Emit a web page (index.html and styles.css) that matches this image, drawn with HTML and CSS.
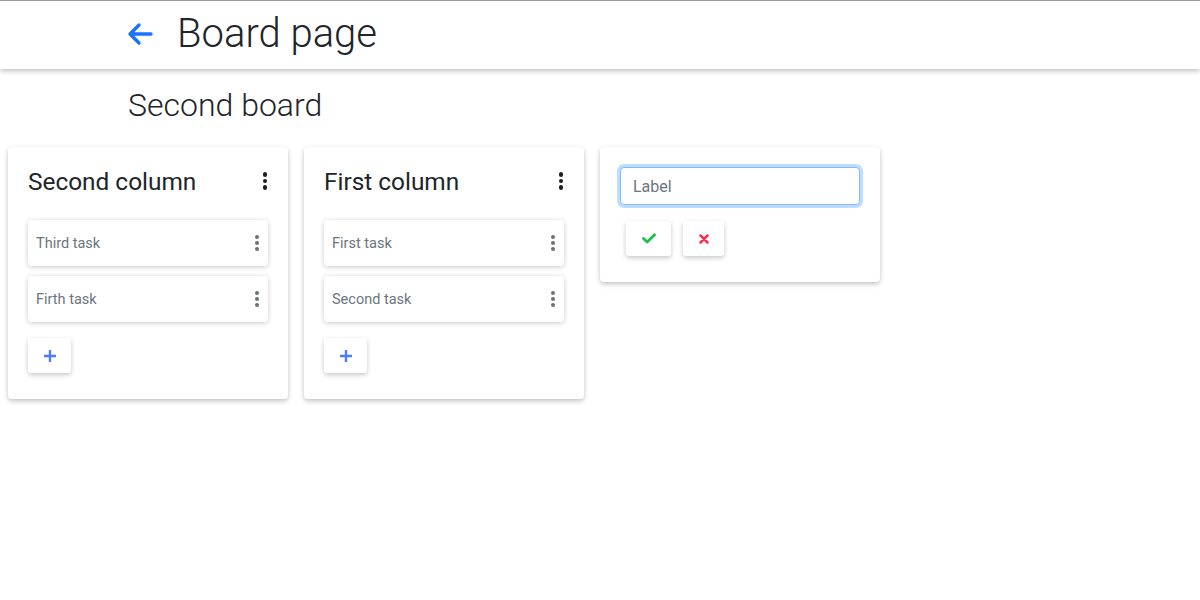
FILE: index.html
```html
<!DOCTYPE html>
<html>
<head>
<meta charset="utf-8">
<link rel="stylesheet" href="styles.css">
</head>
<body>
<header class="topbar">
  <a class="back" href="#">
    <svg width="26" height="24" viewBox="0 0 26 24"><path d="M24 12H3M12 3L3 12L12 21" fill="none" stroke="#1a73ff" stroke-width="3.4" stroke-linecap="round" stroke-linejoin="round"/></svg>
  </a>
  <h1 class="page-title">Board page</h1>
</header>
<h2 class="board-title">Second board</h2>
<main class="columns">
  <section class="column">
    <div class="column-head">
      <h3 class="column-title">Second column</h3>
      <span class="kebab dark"><i></i><i></i><i></i></span>
    </div>
    <div class="tasks">
      <div class="task"><span>Third task</span><span class="kebab"><i></i><i></i><i></i></span></div>
      <div class="task"><span>Firth task</span><span class="kebab"><i></i><i></i><i></i></span></div>
    </div>
    <button class="btn add"><svg width="12" height="12" viewBox="0 0 12 12"><path d="M6 0V12M0 6H12" stroke="#4f7cff" stroke-width="2.4"/></svg></button>
  </section>
  <section class="column">
    <div class="column-head">
      <h3 class="column-title">First column</h3>
      <span class="kebab dark"><i></i><i></i><i></i></span>
    </div>
    <div class="tasks">
      <div class="task"><span>First task</span><span class="kebab"><i></i><i></i><i></i></span></div>
      <div class="task"><span>Second task</span><span class="kebab"><i></i><i></i><i></i></span></div>
    </div>
    <button class="btn add"><svg width="12" height="12" viewBox="0 0 12 12"><path d="M6 0V12M0 6H12" stroke="#4f7cff" stroke-width="2.4"/></svg></button>
  </section>
  <section class="column new-column">
    <input class="label-input" type="text" placeholder="Label">
    <div class="actions">
      <button class="btn ok"><svg width="14" height="11" viewBox="0 0 14 11"><path d="M1.5 5.5L5.2 9L12.5 1.8" fill="none" stroke="#1fbf4a" stroke-width="2.8" stroke-linecap="round" stroke-linejoin="round"/></svg></button>
      <button class="btn cancel"><svg width="10" height="10" viewBox="0 0 10 10"><path d="M1.5 1.5L8.5 8.5M8.5 1.5L1.5 8.5" stroke="#ff2d4f" stroke-width="2.5" stroke-linecap="round"/></svg></button>
    </div>
  </section>
</main>
</body>
</html>
```
FILE: styles.css
```css
* { box-sizing: border-box; }
html, body { margin: 0; padding: 0; background: #fff; }
body { font-family: Roboto, "Noto Sans", Arial, sans-serif; color: #212529; min-height: 100vh; }

.topbar {
  height: 69px;
  border-top: 1px solid #9a9a9a;
  display: flex;
  align-items: center;
  padding-left: 127px;
  gap: 24px;
  box-shadow: 0 2px 5px rgba(0,0,0,0.25);
  background: #fff;
}
.back { display: flex; margin-top: -2px; }
.page-title {
  margin: 0;
  font-size: 40px;
  font-weight: 300;
  line-height: 1;
  margin-top: -3px;
}
.board-title {
  margin: 17px 0 0 128px;
  font-size: 32px;
  font-weight: 300;
  line-height: 38px;
}
.columns {
  display: flex;
  align-items: flex-start;
  gap: 16px;
  padding: 23px 8px 24px;
}
.column {
  width: 280px;
  background: #fff;
  border-radius: 4px;
  box-shadow: 0 2px 5px rgba(0,0,0,0.25);
  padding: 20px 20px 26px;
}
.column-head {
  display: flex;
  justify-content: space-between;
  align-items: flex-start;
  height: 53px;
}
.column-title {
  margin: 0;
  font-size: 24.4px;
  font-weight: 400;
  line-height: 30px;
}
.kebab {
  display: flex;
  flex-direction: column;
  gap: 2px;
  align-items: center;
  width: 8px;
}
.kebab i {
  display: block;
  width: 4px;
  height: 4px;
  border-radius: 50%;
  background: #6b6f78;
}
.kebab.dark { margin-top: 5px; margin-right: -1px; }
.kebab.dark i { background: #1e1e1e; width: 4.5px; height: 4.5px; }
.tasks { display: flex; flex-direction: column; gap: 10px; }
.task {
  height: 46px;
  border-radius: 4px;
  box-shadow: 0 1px 5px rgba(0,0,0,0.22);
  display: flex;
  align-items: center;
  justify-content: space-between;
  padding: 0 7px 0 8px;
  font-size: 14.5px;
  color: #6c757d;
}
.btn {
  border: none;
  background: #fff;
  border-radius: 3px;
  box-shadow: 0 2px 5px rgba(0,0,0,0.22);
  height: 35px;
  display: flex;
  align-items: center;
  justify-content: center;
  padding: 0;
  cursor: pointer;
}
.add { width: 43px; margin-top: 16px; }
.new-column { padding-bottom: 26px; }
.label-input {
  width: 240px;
  height: 38px;
  border: 1px solid #80bdff;
  border-radius: 4px;
  box-shadow: 0 0 0 3px rgba(0,123,255,0.25);
  outline: none;
  padding: 1px 12px 0;
  font-family: Roboto, "Noto Sans", Arial, sans-serif;
  font-size: 16px;
  color: #495057;
}
.label-input::placeholder { color: #6c757d; }
.actions { display: flex; gap: 12px; margin: 16px 0 0 6px; }
.ok { width: 45px; }
.cancel { width: 41px; }
```
